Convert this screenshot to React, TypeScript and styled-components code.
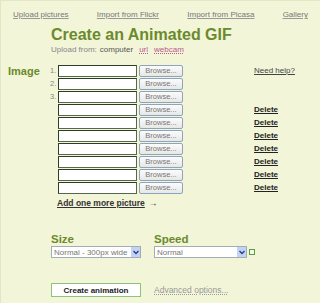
import React from "react";
import styled, { createGlobalStyle } from "styled-components";

const Global = createGlobalStyle`
  html, body { margin: 0; padding: 0; }
  body {
    background: #f2f5d8;
    font-family: "Liberation Sans", Arial, sans-serif;
    width: 320px;
    height: 303px;
    overflow: hidden;
  }
`;

const Page = styled.div`
  width: 320px;
  height: 303px;
  box-sizing: border-box;
  border-left: 1px solid #e2e8c6;
  border-top: 1px solid #e2e8c6;
  padding-top: 9px;
`;

const Nav = styled.nav`
  display: flex;
  justify-content: space-between;
  padding: 0 12px 0 12px;
`;

const NavLink = styled.a`
  font-size: 8px;
  color: #777;
  text-decoration: underline;
  text-decoration-color: #999;
`;

const Header = styled.div`
  margin: 7px 0 0 50px;
`;

const Title = styled.h1`
  margin: 0;
  font-size: 16px;
  line-height: 18px;
  font-weight: bold;
  color: #6b8a2c;
`;

const Sub = styled.div`
  font-size: 8px;
  color: #888;
  margin-top: 1px;
  display: flex;
  gap: 3px;
`;

const SubItem = styled.span<{ $link?: boolean }>`
  color: ${(p) => (p.$link ? "#b85a8a" : "#555")};
  text-decoration: ${(p) => (p.$link ? "underline dotted" : "none")};
  margin-left: ${(p) => (p.$link ? "3px" : "0")};
`;

const Section = styled.div`
  display: grid;
  grid-template-columns: 49px 1fr;
  margin-top: 10px;
`;

const Label = styled.div`
  font-size: 11px;
  font-weight: bold;
  color: #6b8a2c;
  padding-left: 7px;
  line-height: 14px;
`;

const Rows = styled.div`
  display: flex;
  flex-direction: column;
`;

const Row = styled.div`
  display: flex;
  align-items: center;
  height: 13px;
`;

const Num = styled.span`
  width: 8px;
  font-size: 7.5px;
  color: #888;
  text-align: left;
`;

const FileBox = styled.div`
  width: 77px;
  height: 10px;
  background: #fff;
  border: 1px solid #55684a;
  border-top-color: #2e3d28;
  border-left-color: #2e3d28;
`;

const BrowseBtn = styled.button`
  margin-left: 2px;
  width: 44px;
  height: 12px;
  padding: 0;
  box-sizing: border-box;
  border: 1px solid #8ea4bc;
  border-radius: 2px;
  background: linear-gradient(#fbfbfb, #e6e8e6);
  font-family: "Liberation Sans", Arial, sans-serif;
  font-size: 7.5px;
  color: #777;
  line-height: 10px;
`;

const Action = styled.a<{ $bold?: boolean }>`
  margin-left: 71px;
  font-size: 8px;
  font-weight: ${(p) => (p.$bold ? "bold" : "normal")};
  color: ${(p) => (p.$bold ? "#222" : "#444")};
  text-decoration: underline;
`;

const AddMore = styled.div`
  margin: 4px 0 0 7px;
  font-size: 8.5px;
  font-weight: bold;
  color: #333;
  display: flex;
  align-items: center;
  gap: 4px;
`;

const AddLink = styled.a`
  text-decoration: underline;
`;

const Options = styled.div`
  display: flex;
  gap: 13px;
  margin: 25px 0 0 50px;
  align-items: flex-end;
`;

const Field = styled.div`
  display: flex;
  flex-direction: column;
`;

const FieldLabel = styled.div`
  font-size: 11.5px;
  font-weight: bold;
  color: #6b8a2c;
  line-height: 13px;
`;

const SelectLine = styled.div`
  display: flex;
  align-items: center;
`;

const Select = styled.div<{ $w: number }>`
  width: ${(p) => p.$w}px;
  height: 12px;
  box-sizing: border-box;
  border: 1px solid #a4acb8;
  background: #fff;
  display: flex;
  align-items: center;
  justify-content: space-between;
  font-size: 8px;
  color: #777;
  padding-left: 2px;
`;

const Arrow = styled.span`
  width: 9px;
  height: 10px;
  background: #c3d3f3;
  display: flex;
  align-items: center;
  justify-content: center;
`;

const GreenSquare = styled.span`
  width: 4px;
  height: 4px;
  border: 1px solid #5aa03a;
  background: #f4f8e8;
  margin-left: 2px;
`;

const Bottom = styled.div`
  display: flex;
  align-items: center;
  gap: 13px;
  margin: 25px 0 0 50px;
`;

const CreateBtn = styled.button`
  width: 90px;
  height: 14px;
  box-sizing: border-box;
  background: #fff;
  border: 1px solid #8cc47a;
  font-family: "Liberation Sans", Arial, sans-serif;
  font-size: 8px;
  font-weight: bold;
  color: #222;
  padding: 0;
`;

const Advanced = styled.a`
  font-size: 8.5px;
  color: #999;
  text-decoration: underline dotted;
`;

const Chevron = () => (
  <svg width="6" height="5" viewBox="0 0 6 5">
    <path d="M0.5 1 L3 3.5 L5.5 1" stroke="#2a3f8a" strokeWidth="1.4" fill="none" />
  </svg>
);

export default function App() {
  const rows = Array.from({ length: 10 }, (_, i) => i);
  return (
    <>
      <Global />
      <Page>
        <Nav>
          <NavLink>Upload pictures</NavLink>
          <NavLink>Import from Flickr</NavLink>
          <NavLink>Import from Picasa</NavLink>
          <NavLink>Gallery</NavLink>
        </Nav>
        <Header>
          <Title>Create an Animated GIF</Title>
          <Sub>
            Upload from: <SubItem>computer</SubItem>
            <SubItem $link>url</SubItem>
            <SubItem $link>webcam</SubItem>
          </Sub>
        </Header>
        <Section>
          <Label>Image</Label>
          <Rows>
            {rows.map((i) => (
              <Row key={i}>
                <Num>{i < 3 ? `${i + 1}.` : ""}</Num>
                <FileBox />
                <BrowseBtn>Browse...</BrowseBtn>
                {i === 0 && <Action>Need help?</Action>}
                {i >= 3 && <Action $bold>Delete</Action>}
              </Row>
            ))}
            <AddMore>
              <AddLink>Add one more picture</AddLink>
              <span>→</span>
            </AddMore>
          </Rows>
        </Section>
        <Options>
          <Field>
            <FieldLabel>Size</FieldLabel>
            <Select $w={90}>
              Normal - 300px wide
              <Arrow>
                <Chevron />
              </Arrow>
            </Select>
          </Field>
          <Field>
            <FieldLabel>Speed</FieldLabel>
            <SelectLine>
              <Select $w={93}>
                Normal
                <Arrow>
                  <Chevron />
                </Arrow>
              </Select>
              <GreenSquare />
            </SelectLine>
          </Field>
        </Options>
        <Bottom>
          <CreateBtn>Create animation</CreateBtn>
          <Advanced>Advanced options...</Advanced>
        </Bottom>
      </Page>
    </>
  );
}
